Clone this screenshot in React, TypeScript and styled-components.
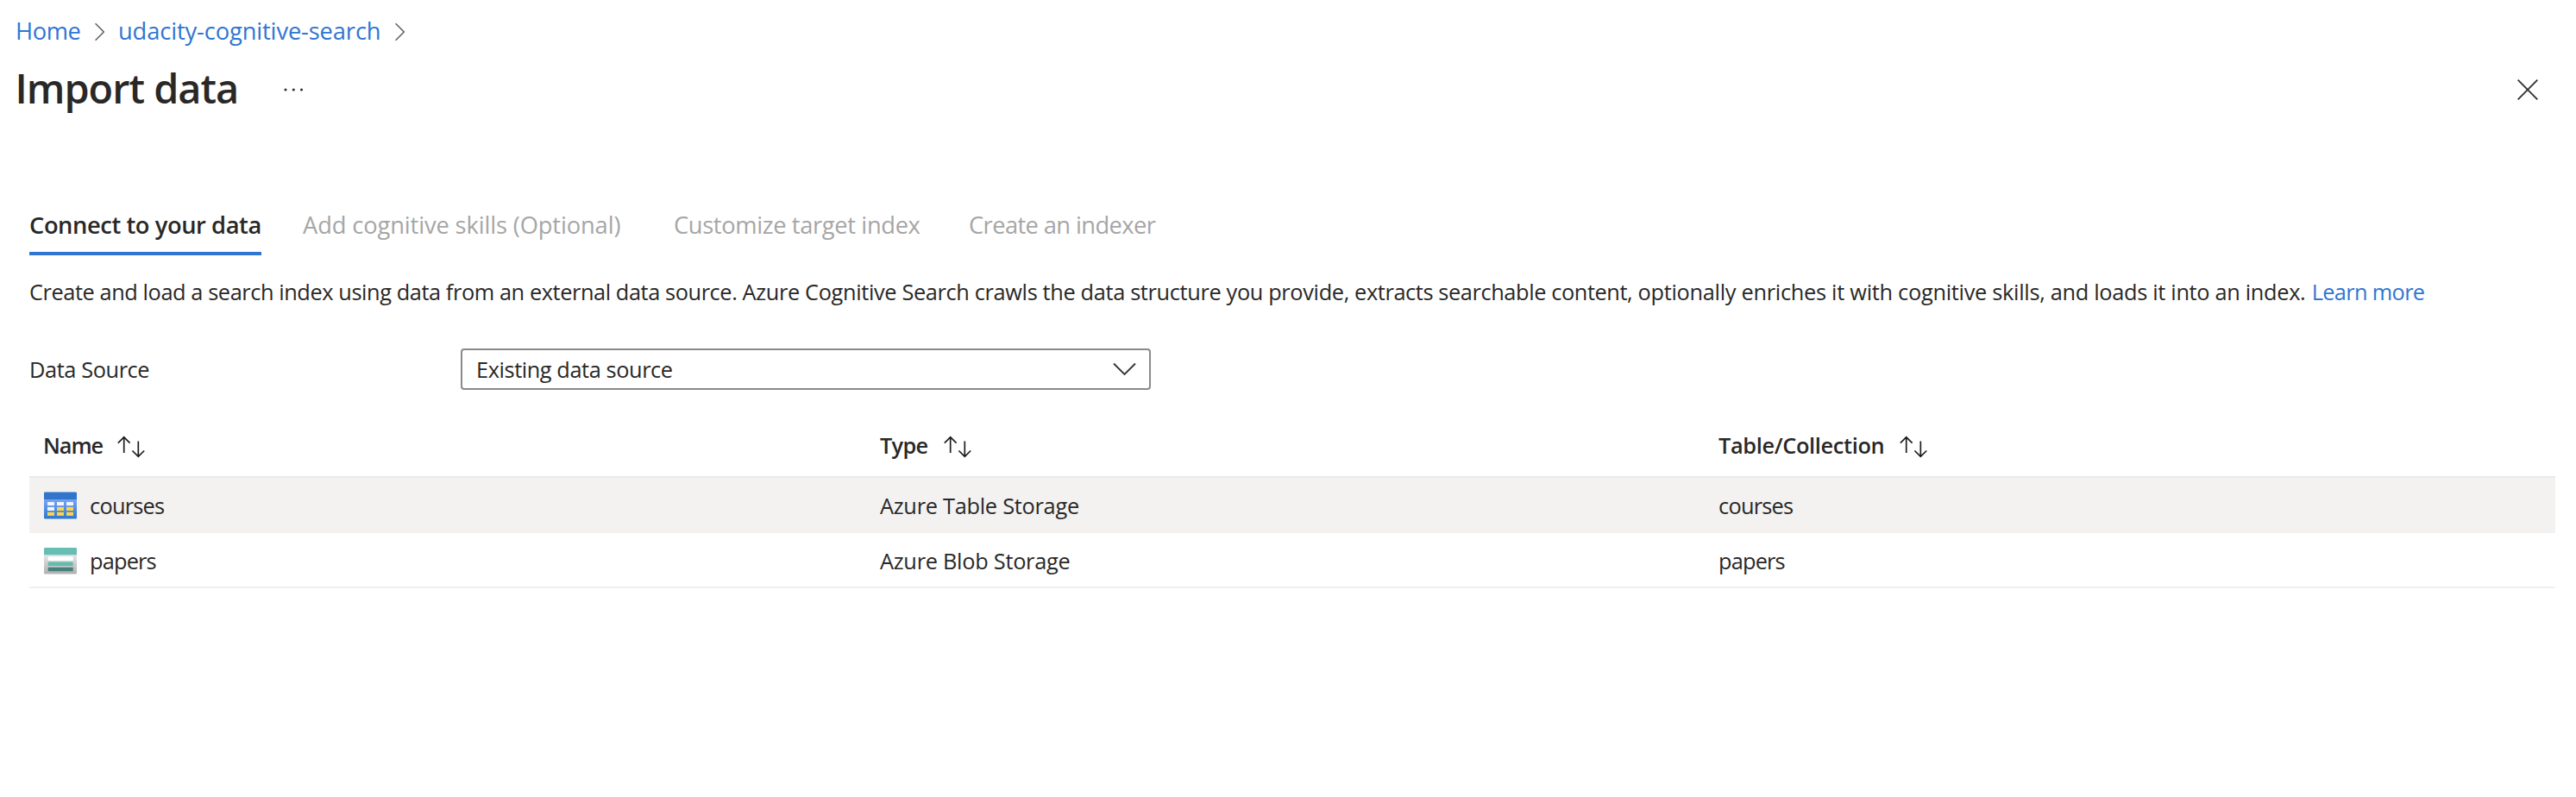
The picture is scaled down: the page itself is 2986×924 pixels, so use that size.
import React from 'react';
import styled, { createGlobalStyle } from 'styled-components';

const GlobalStyle = createGlobalStyle`
  *, *::before, *::after { box-sizing: border-box; }
  body {
    margin: 0;
    background: #fff;
    color: #292827;
    font-family: "Open Sans", "Noto Sans", sans-serif;
    font-size: 25.35px;
    line-height: 40px;
  }
  svg { display: block; flex: none; }
`;

const Page = styled.div`
  width: 100%;
  min-height: 924px;
  overflow: hidden;
`;

const Text = styled.span<{ $spacing?: number }>`
  letter-spacing: ${(p) => p.$spacing ?? -0.3}px;
  white-space: nowrap;
`;

const Breadcrumb = styled.nav`
  display: flex;
  align-items: center;
  height: 70px;
  padding: 2px 0 0 18px;
  font-size: 27.3px;
`;

const Crumb = styled.a<{ $spacing: number; $width: number }>`
  width: ${(p) => p.$width}px;
  letter-spacing: ${(p) => p.$spacing}px;
  color: #2f76d2;
  text-decoration: none;
  white-space: nowrap;
`;

const CrumbArrow = styled.svg`
  margin: 2px 16px 0 17px;
`;

const TitleBar = styled.header`
  display: flex;
  align-items: center;
  height: 68px;
  padding: 0 44px 0 17.5px;
`;

const Title = styled.h1`
  margin: 0;
  padding-bottom: 4px;
  width: 311.5px;
  font-size: 46.8px;
  font-weight: 600;
  line-height: 64px;
  letter-spacing: -0.98px;
  white-space: nowrap;
`;

const CloseButton = styled.button`
  margin-left: auto;
  padding: 0;
  border: 0;
  background: none;
`;

const Content = styled.main`
  padding: 90px 24px 0 34px;
`;

const Tabs = styled.div`
  display: flex;
  gap: 48px;
`;

const Tab = styled.div<{ $active?: boolean; $width: number; $spacing: number }>`
  width: ${(p) => p.$width}px;
  height: 68px;
  padding-top: 1px;
  border-bottom: 4px solid ${(p) => (p.$active ? '#2f76d2' : 'transparent')};
  color: ${(p) => (p.$active ? '#292827' : '#a6a6a6')};
  font-size: 27.3px;
  font-weight: ${(p) => (p.$active ? 600 : 400)};
  line-height: 64px;
  letter-spacing: ${(p) => p.$spacing}px;
  white-space: nowrap;
`;

const Description = styled.p`
  margin: 22px 0 0;
  white-space: nowrap;
`;

const Link = styled.a`
  margin-left: 1px;
  color: #2f76d2;
  letter-spacing: -0.66px;
  text-decoration: none;
`;

const Field = styled.div`
  display: flex;
  align-items: center;
  margin-top: 46px;
`;

const Label = styled.label`
  width: 500px;
  letter-spacing: -0.4px;
`;

const Select = styled.div`
  display: flex;
  align-items: center;
  justify-content: space-between;
  width: 800px;
  height: 48px;
  padding: 0 15px 0 16px;
  border: 2px solid #8a8a8a;
  border-radius: 4px;
`;

const Table = styled.div`
  margin-top: 28px;
`;

const Row = styled.div<{ $selected?: boolean }>`
  display: grid;
  grid-template-columns: 970px 972px 1fr;
  align-items: center;
  height: 64px;
  padding-left: 16px;
  background: ${(p) => (p.$selected ? '#f3f2f1' : '#fff')};
  box-shadow: inset 0 -2px 0 ${(p) => (p.$selected ? '#f3f2f1' : '#f1f0f0')};
`;

const HeaderRow = styled(Row)`
  height: 74px;
  padding-bottom: 2px;
  font-weight: 600;
  box-shadow: inset 0 -2px 0 #eaeaea;
`;

const Cell = styled.div<{ $gap?: number; $indent?: number }>`
  display: flex;
  align-items: center;
  gap: ${(p) => p.$gap ?? 0}px;
  padding-left: ${(p) => p.$indent ?? 0}px;
`;

const SortArrows = styled.svg`
  margin-top: 4px;
`;

const SortIcon = () => (
  <SortArrows width="33" height="26" viewBox="0 0 33 26" fill="none" stroke="#1d1d1d" strokeWidth="1.7">
    <path d="M7.7 20V1.5M0.8 8.7L7.7 1.8l6.9 6.9M24.3 6.5v18M17.4 17.5l6.9 6.9 6.9-6.9" />
  </SortArrows>
);

const TableIcon = () => (
  <svg width="38" height="32" viewBox="0 0 38 32">
    <defs>
      <linearGradient id="tableBody" x1="0" y1="0" x2="0" y2="1">
        <stop offset="0" stopColor="#76a5f2" />
        <stop offset="1" stopColor="#3175cf" />
      </linearGradient>
    </defs>
    <path d="M0 9h38v21.3a1.2 1.2 0 0 1-1.2 1.2H1.2A1.2 1.2 0 0 1 0 30.3z" fill="url(#tableBody)" />
    <path d="M1.2 .5h35.6A1.2 1.2 0 0 1 38 1.7V9H0V1.7A1.2 1.2 0 0 1 1.2 .5z" fill="#3074cc" />
    {[0, 1, 2].map((r) =>
      [0, 1, 2].map((c) => (
        <rect
          key={`${r}${c}`}
          x={4 + c * 11}
          y={12 + r * 5.9}
          width="8"
          height="4.1"
          fill={r === 0 || (r === 1 && c === 0) ? '#f0f4fd' : '#f9d54a'}
        />
      )),
    )}
  </svg>
);

const BlobIcon = () => (
  <svg width="38" height="32" viewBox="0 0 38 32">
    <defs>
      <linearGradient id="blobBody" x1="0" y1="0" x2="0" y2="1">
        <stop offset="0" stopColor="#e6e6e6" />
        <stop offset="1" stopColor="#b1b1b1" />
      </linearGradient>
    </defs>
    <path d="M0 9h38v21.3a1.2 1.2 0 0 1-1.2 1.2H1.2A1.2 1.2 0 0 1 0 30.3z" fill="url(#blobBody)" />
    <path d="M1.2 1h35.6A1.2 1.2 0 0 1 38 2.2V9.3H0V2.2A1.2 1.2 0 0 1 1.2 1z" fill="#65beb1" />
    <rect x="4.7" y="11.3" width="29" height="4.7" rx=".6" fill="#fff" />
    <rect x="4.7" y="17.5" width="29" height="4.5" rx=".6" fill="#62bdb0" />
    <rect x="4.7" y="23.7" width="29" height="4.5" rx=".6" fill="#45807a" />
  </svg>
);

const ChevronRight = () => (
  <CrumbArrow width="11" height="22" viewBox="0 0 11 22" fill="none" stroke="#666" strokeWidth="1.6">
    <path d="M.6 1.3L10.3 11 .6 20.7" />
  </CrumbArrow>
);

const description = [
  { text: 'Create and load a search index using data from an external data source. ', spacing: -0.418 },
  { text: 'Azure Cognitive Search crawls the data structure you provide, ', spacing: -0.35 },
  { text: 'extracts searchable content, ', spacing: -0.4 },
  { text: 'optionally enriches it with cognitive skills, ', spacing: -0.28 },
  { text: 'and loads it into an index. ', spacing: -0.32 },
];

const columns = [
  { label: 'Name', spacing: -1.05, gap: 17 },
  { label: 'Type', spacing: -0.7, gap: 19 },
  { label: 'Table/Collection', spacing: -0.35, gap: 18 },
];

const rows = [
  { name: 'courses', type: 'Azure Table Storage', spacing: -0.75, icon: <TableIcon />, selected: true },
  { name: 'papers', type: 'Azure Blob Storage', spacing: -0.82, icon: <BlobIcon />, selected: false },
];

export default function App() {
  return (
    <Page>
      <GlobalStyle />
      <Breadcrumb>
        <Crumb $spacing={-0.44} $width={75}>Home</Crumb>
        <ChevronRight />
        <Crumb $spacing={-0.13} $width={304}>udacity-cognitive-search</Crumb>
        <ChevronRight />
      </Breadcrumb>
      <TitleBar>
        <Title>Import data</Title>
        <svg width="24" height="6" viewBox="0 0 24 6" fill="#333">
          <circle cx="2" cy="3" r="1.6" />
          <circle cx="11.3" cy="3" r="1.6" />
          <circle cx="20.5" cy="3" r="1.6" />
        </svg>
        <CloseButton aria-label="Close">
          <svg width="24" height="24" viewBox="0 0 24 24" fill="none" stroke="#333" strokeWidth="1.9">
            <path d="M.7.7l22.6 22.6M23.3.7L.7 23.3" />
          </svg>
        </CloseButton>
      </TitleBar>
      <Content>
        <Tabs>
          <Tab $active $width={269} $spacing={-0.42}>Connect to your data</Tab>
          <Tab $width={382} $spacing={-0.13}>Add cognitive skills (Optional)</Tab>
          <Tab $width={294} $spacing={-0.36}>Customize target index</Tab>
          <Tab $width={220} $spacing={-0.6}>Create an indexer</Tab>
        </Tabs>
        <Description>
          {description.map((part) => (
            <Text key={part.text} $spacing={part.spacing}>{part.text}</Text>
          ))}
          <Link>Learn more</Link>
        </Description>
        <Field>
          <Label>Data Source</Label>
          <Select>
            <Text $spacing={-0.42}>Existing data source</Text>
            <svg width="27" height="16" viewBox="0 0 27 16" fill="none" stroke="#333" strokeWidth="1.9">
              <path d="M1 1.5l12.5 12.5L26 1.5" />
            </svg>
          </Select>
        </Field>
        <Table>
          <HeaderRow>
            {columns.map((c) => (
              <Cell key={c.label} $gap={c.gap}>
                <Text $spacing={c.spacing}>{c.label}</Text>
                <SortIcon />
              </Cell>
            ))}
          </HeaderRow>
          {rows.map((r) => (
            <Row key={r.name} $selected={r.selected}>
              <Cell $gap={15} $indent={1}>
                {r.icon}
                <Text $spacing={r.spacing}>{r.name}</Text>
              </Cell>
              <Cell>
                <Text $spacing={-0.27}>{r.type}</Text>
              </Cell>
              <Cell>
                <Text $spacing={r.spacing}>{r.name}</Text>
              </Cell>
            </Row>
          ))}
        </Table>
      </Content>
    </Page>
  );
}
